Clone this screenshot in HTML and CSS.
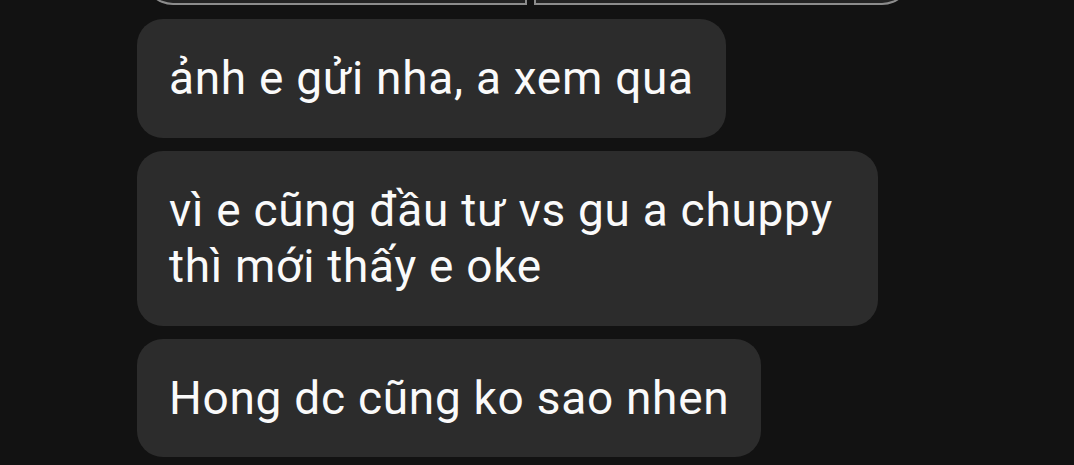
FILE: index.html
```html
<!DOCTYPE html>
<html lang="vi">
<head>
<meta charset="utf-8">
<link rel="stylesheet" href="styles.css">
</head>
<body>
<div class="chat">
  <div class="attachments">
    <div class="att att-left"></div>
    <div class="att att-right"></div>
  </div>
  <div class="bubble">ảnh e gửi nha, a xem qua</div>
  <div class="bubble">vì e cũng đầu tư vs gu a chuppy thì mới thấy e oke</div>
  <div class="bubble">Hong dc cũng ko sao nhen</div>
</div>
</body>
</html>
```
FILE: styles.css
```css
html, body {
  margin: 0;
  padding: 0;
  background: #121212;
  height: 100%;
  overflow: hidden;
}
.chat {
  display: flex;
  flex-direction: column;
  align-items: flex-start;
  gap: 13px;
  padding-left: 137px;
  font-family: Roboto, "Noto Sans", sans-serif;
}
.attachments {
  display: flex;
  gap: 7px;
  margin-top: -35px;
  margin-left: 6px;
  margin-bottom: 1px;
  height: 40px;
}
.att {
  box-sizing: border-box;
  height: 40px;
  background: #232323;
  border: 2px solid #8c8c8c;
  border-top: none;
}
.att-left {
  width: 384px;
  border-bottom-left-radius: 30px;
}
.att-right {
  width: 378px;
  border-bottom-right-radius: 30px;
}
.bubble {
  box-sizing: border-box;
  max-width: 741px;
  background: #2c2c2c;
  color: #fafafa;
  font-size: 46px;
  letter-spacing: 0.72px;
  line-height: 56.5px;
  padding: 31px 32px 31px 32px;
  border-radius: 26px;
}
```
